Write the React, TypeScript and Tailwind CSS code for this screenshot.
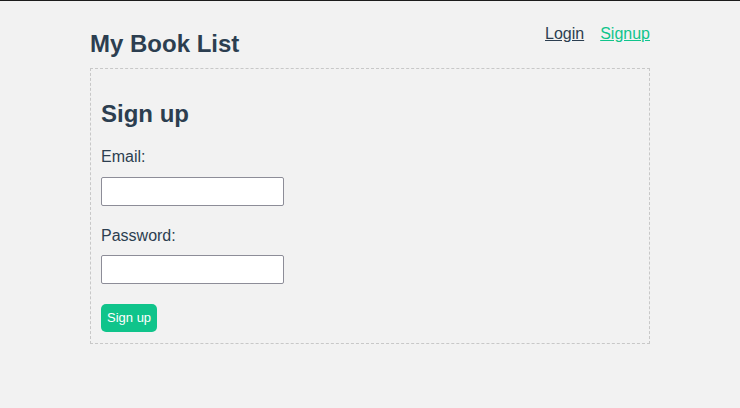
export default function App() {
  return (
    <div className="min-h-[408px] w-full bg-[#f2f2f2] text-[#2c3e50]" style={{ fontFamily: '"Liberation Sans", Arial, sans-serif' }}>
      <div className="h-px w-full bg-[#1c1c1c]" />
      <div className="mx-auto w-[560px]">
        {/* Header */}
        <div className="flex items-start justify-between">
          <h1 className="mt-[29px] text-[24px] font-bold leading-[28px]">My Book List</h1>
          <nav className="mt-[24px] flex gap-4 text-[16px] leading-[18px]">
            <a href="#" className="text-[#2c3e50] underline">Login</a>
            <a href="#" className="text-[#10c48b] underline">Signup</a>
          </nav>
        </div>

        {/* Form box */}
        <div className="mt-[10px] border border-dashed border-[#c8c8c8] px-[10px] pt-[11px] pb-[11px]">
          <h2 className="mt-[20px] text-[24px] font-bold leading-[28px]">Sign up</h2>
          <form className="mt-[20px] flex flex-col items-start text-[16px]">
            <label className="leading-[18px]">Email:</label>
            <input type="email" className="mt-[11px] h-[29px] w-[183px] rounded-[2px] border border-[#8d8d98] bg-white" />
            <label className="mt-[21px] leading-[18px]">Password:</label>
            <input type="password" className="mt-[10px] h-[29px] w-[183px] rounded-[2px] border border-[#8d8d98] bg-white" />
            <button type="button" className="mt-[20px] h-[28px] rounded-[5px] bg-[#10c48b] px-[6px] text-[13px] text-white">
              Sign up
            </button>
          </form>
        </div>
      </div>
    </div>
  )
}
